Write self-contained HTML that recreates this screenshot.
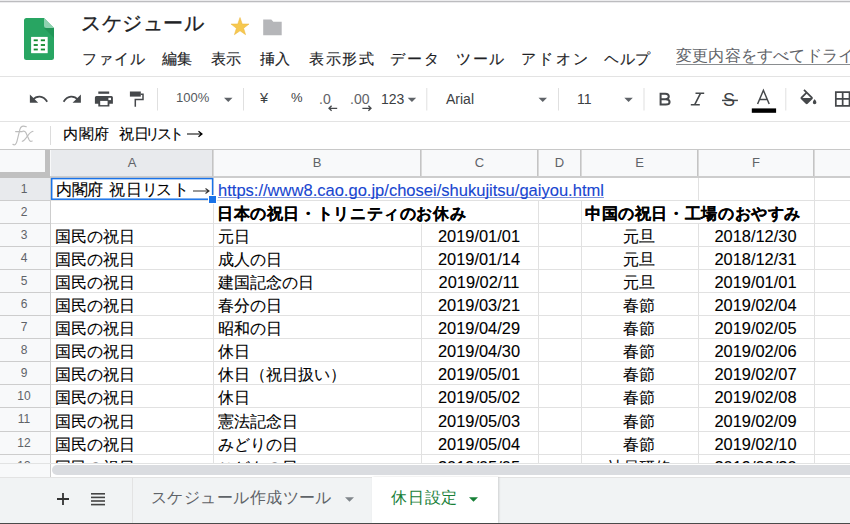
<!DOCTYPE html>
<html><head><meta charset="utf-8">
<style>
*{margin:0;padding:0;box-sizing:border-box}
html,body{width:850px;height:524px;overflow:hidden;background:#fff;font-family:"Liberation Sans",sans-serif;color:#000}
.a{position:absolute;white-space:nowrap}
.hl{position:absolute;left:0;width:850px;height:1px}
.vl{position:absolute;width:1px}
.menu{position:absolute;top:50px;font-size:15px;line-height:18px;color:#202124;white-space:nowrap;-webkit-text-stroke-width:0.15px}
.ch{position:absolute;top:150px;height:26px;font-size:13px;line-height:26px;text-align:center;color:#5f6368}
.rn{position:absolute;left:-1px;width:50px;font-size:12px;text-align:center;color:#5f6368}
.c{position:absolute;font-size:16.4px;line-height:19px;white-space:nowrap;-webkit-text-stroke-width:0.1px}
.ic{position:absolute}
</style></head><body>

<div class="hl" style="top:0;background:#ececee"></div>
<div class="hl" style="top:1px;background:#bcbcbf"></div>
<div class="hl" style="top:2px;background:#ececee"></div>

<svg class="a" style="left:24px;top:18px" width="30" height="42" viewBox="0 0 30 42">
  <path d="M2.5 0H20L30 10V39.5A2.5 2.5 0 0 1 27.5 42H2.5A2.5 2.5 0 0 1 0 39.5V2.5A2.5 2.5 0 0 1 2.5 0Z" fill="#28a562"/>
  <path d="M20 10L30 20V10Z" fill="#1a8a4e" opacity="0.55"/>
  <path d="M20 0L30 10H22.5A2.5 2.5 0 0 1 20 7.5Z" fill="#8fd2b0"/>
  <rect x="7.1" y="19.4" width="16.6" height="16.3" fill="#1d8f50" opacity="0.35"/>
  <rect x="7.1" y="18.9" width="16.6" height="16.3" fill="#fff"/>
  <g fill="#128a2c">
  <rect x="9.7" y="21.4" width="4.1" height="1.8"/><rect x="16.8" y="21.4" width="4.2" height="1.8"/>
  <rect x="9.7" y="26.1" width="4.1" height="1.8"/><rect x="16.8" y="26.1" width="4.2" height="1.8"/>
  <rect x="9.7" y="30.6" width="4.1" height="1.8"/><rect x="16.8" y="30.6" width="4.2" height="1.8"/>
  </g>
</svg>
<div class="a" style="left:81px;top:10px;font-size:20px;letter-spacing:0.6px;line-height:26px;color:#202124;-webkit-text-stroke-width:0.3px">スケジュール</div>

<svg class="a" style="left:230.1px;top:17.2px" width="20" height="20" viewBox="0 0 20 20"><polygon points="10.00,0.50 12.23,6.93 19.04,7.06 13.61,11.17 15.58,17.69 10.00,13.80 4.42,17.69 6.39,11.17 0.96,7.06 7.77,6.93" fill="#f6c84f" stroke="#ebb53a" stroke-width="0.5"/></svg>
<svg class="a" style="left:263px;top:19px" width="20" height="17" viewBox="0 0 20 17"><path d="M0.2 0.6H8.3L10.3 2.8H18.7V16.3H0.2Z" fill="#b5b6b9"/></svg>
<div class="menu" style="left:82px;letter-spacing:0.9px">ファイル</div>
<div class="menu" style="left:162px;letter-spacing:0px">編集</div>
<div class="menu" style="left:211px;letter-spacing:0px">表示</div>
<div class="menu" style="left:260px;letter-spacing:0px">挿入</div>
<div class="menu" style="left:309px;letter-spacing:1.7px">表示形式</div>
<div class="menu" style="left:390px;letter-spacing:2px">データ</div>
<div class="menu" style="left:456px;letter-spacing:1.5px">ツール</div>
<div class="menu" style="left:521px;letter-spacing:2.3px">アドオン</div>
<div class="menu" style="left:604px;letter-spacing:0.7px">ヘルプ</div>
<div class="a" style="left:676px;top:47px;font-size:16px;line-height:18px;letter-spacing:0.2px;color:#5f6368">変更内容をすべてドライブに保存しました</div>
<div class="a" style="left:676px;top:64px;width:174px;height:1px;background:#8a8d90"></div>
<div class="hl" style="top:76px;background:#e3e3e3"></div>

<svg class="a" style="left:0;top:0" width="850" height="524"><path d="M29.9 94.4V102.7H38.2Z" fill="#45484b"/><path d="M32.8 99.6C36.5 95.6 43 94.8 47.2 101.8" fill="none" stroke="#45484b" stroke-width="1.8"/><path d="M80.9 94.4V102.7H72.6Z" fill="#45484b"/><path d="M78 99.6C74.3 95.6 67.8 94.8 63.6 101.8" fill="none" stroke="#45484b" stroke-width="1.8"/><rect x="98.3" y="91.5" width="10.9" height="2.3" fill="#45484b"/><path d="M96.4 95.9H111.4A1.5 1.5 0 0 1 112.9 97.4V103.7H109.4V106.5H98.3V103.7H94.9V97.4A1.5 1.5 0 0 1 96.4 95.9Z" fill="#45484b"/><rect x="100.2" y="100.9" width="7.4" height="4.2" fill="#fff"/><rect x="108.4" y="97.8" width="2.6" height="2.3" fill="#fff"/><rect x="129.9" y="91.5" width="10.9" height="5.1" fill="#45484b"/><path d="M140.8 94.2H143V99.5H135.3V106.7" fill="none" stroke="#45484b" stroke-width="1.5"/><path d="M660.6 92.8V105.6M659.6 93.8H665.3C667.5 93.8 668.8 95 668.8 96.6C668.8 98.2 667.5 99.3 665.3 99.3H660.6M660.6 99.3H665.8C668.2 99.3 669.6 100.6 669.6 102.1C669.6 103.6 668.2 104.6 665.8 104.6H659.6" fill="none" stroke="#45484b" stroke-width="2"/><path d="M695.5 93.2H704.2M690.8 104.8H699.8M700.6 93.2L694.6 104.8" fill="none" stroke="#45484b" stroke-width="1.6"/><path d="M722 100.4H737.9" stroke="#45484b" stroke-width="1.5"/><path d="M757.6 104L763.4 90.3L769.2 104M759.6 99.6H767.2" fill="none" stroke="#45484b" stroke-width="1.5"/><rect x="751.8" y="108.4" width="24.3" height="4.4" fill="#000"/><g transform="translate(797.9,89.2) scale(0.88)"><path d="M16.56 8.94L7.62 0 6.21 1.41l2.38 2.38-5.15 5.15c-.59.59-.59 1.540 0 2.12l5.5 5.5c.29.29.68.44 1.060.44s.77-.15 1.06-.44l5.5-5.5c.59-.58.59-1.53 0-2.12zM5.21 10L10 5.21 14.79 10H5.21zM19 11.5s-2 2.17-2 3.5c0 1.1.9 2 2 2s2-.9 2-2c0-1.33-2-3.5-2-3.5z" fill="#45484b"/></g><g transform="translate(832.4,88.7) scale(0.856)"><path d="M3 3v18h18V3H3zm8 16H5v-6h6v6zm0-8H5V5h6v6zm8 8h-6v-6h6v6zm0-8h-6V5h6v6z" fill="#45484b"/></g><path d="M224 97.8H232.5L228.25 102Z" fill="#5f6368"/><path d="M407.7 97.8H416.2L411.95 102Z" fill="#5f6368"/><path d="M538.5 97.8H547.0L542.75 102Z" fill="#5f6368"/><path d="M624.3 97.8H632.8L628.55 102Z" fill="#5f6368"/><path d="M329 108.3H337.2M331.6 105.8L329 108.3L331.6 110.8" fill="none" stroke="#45484b" stroke-width="1.3"/><path d="M362.4 108.3H371M368.4 105.8L371 108.3L368.4 110.8" fill="none" stroke="#45484b" stroke-width="1.3"/><rect x="157.0" y="88" width="1" height="22.5" fill="#e0e0e0"/><rect x="243.0" y="88" width="1" height="22.5" fill="#e0e0e0"/><rect x="426.3" y="88" width="1" height="22.5" fill="#e0e0e0"/><rect x="558.0" y="88" width="1" height="22.5" fill="#e0e0e0"/><rect x="643.5" y="88" width="1" height="22.5" fill="#e0e0e0"/><rect x="785.3" y="88" width="1" height="22.5" fill="#e0e0e0"/></svg>
<div style="position:absolute;white-space:nowrap;line-height:16px;left:176px;top:89.5px;font-size:13px;color:#55595d">100%</div>
<div style="position:absolute;white-space:nowrap;line-height:16px;left:260px;top:90px;font-size:14.5px;color:#3c4043">¥</div>
<div style="position:absolute;white-space:nowrap;line-height:16px;left:291px;top:90px;font-size:13px;color:#3c4043">%</div>
<div style="position:absolute;white-space:nowrap;line-height:16px;left:319px;top:91px;font-size:14px;color:#5f6368">.0</div>
<div style="position:absolute;white-space:nowrap;line-height:16px;left:350px;top:91px;font-size:14px;color:#5f6368">.00</div>
<div style="position:absolute;white-space:nowrap;line-height:16px;left:381px;top:91px;font-size:14px;color:#3c4043">123</div>
<div style="position:absolute;white-space:nowrap;line-height:16px;left:446px;top:91px;font-size:14px;color:#3c4043">Arial</div>
<div style="position:absolute;white-space:nowrap;line-height:16px;left:577px;top:91px;font-size:14px;color:#3c4043">11</div>
<div style="position:absolute;white-space:nowrap;line-height:16px;left:723px;top:91px;font-size:18px;line-height:18px;color:#3c4043">S</div>

<div class="hl" style="top:121px;background:#e3e3e3"></div>

<svg class="a" style="left:0;top:115px" width="50" height="35" viewBox="0 115 50 35"><g fill="none" stroke="#bdbdbd" stroke-width="1.15" stroke-linecap="round"><path d="M12.9 144.3C14.6 145.6 16.3 144.5 17 141.2L19.9 129.3C20.6 126.4 22.8 125.3 26.3 126.7"/><path d="M15.6 131.6H22.3"/><path d="M22.6 131.2C24 130.8 25.1 131.2 25.8 132.6L29.2 140.1C29.8 141.3 30.9 141.6 32.2 141"/><path d="M33 131.3C31.2 131.6 29.6 133.2 27.3 136.3C25.3 139 23.9 140.9 22.3 141.3"/></g></svg>
<div class="vl" style="left:50px;top:126px;height:19px;background:#dcdcdc"></div>
<div style="position:absolute;top:126px;font-size:14.5px;line-height:17px;color:#000;white-space:nowrap;-webkit-text-stroke-width:0.12px;left:63px">内</div>
<div style="position:absolute;top:126px;font-size:14.5px;line-height:17px;color:#000;white-space:nowrap;-webkit-text-stroke-width:0.12px;left:78.5px">閣</div>
<div style="position:absolute;top:126px;font-size:14.5px;line-height:17px;color:#000;white-space:nowrap;-webkit-text-stroke-width:0.12px;left:94.3px">府</div>
<div style="position:absolute;top:126px;font-size:14.5px;line-height:17px;color:#000;white-space:nowrap;-webkit-text-stroke-width:0.12px;left:119px">祝</div>
<div style="position:absolute;top:126px;font-size:14.5px;line-height:17px;color:#000;white-space:nowrap;-webkit-text-stroke-width:0.12px;left:134px">日</div>
<div style="position:absolute;top:126px;font-size:14.5px;line-height:17px;color:#000;white-space:nowrap;-webkit-text-stroke-width:0.12px;left:145px">リ</div>
<div style="position:absolute;top:126px;font-size:14.5px;line-height:17px;color:#000;white-space:nowrap;-webkit-text-stroke-width:0.12px;left:156.5px">ス</div>
<div style="position:absolute;top:126px;font-size:14.5px;line-height:17px;color:#000;white-space:nowrap;-webkit-text-stroke-width:0.12px;left:169px">ト</div>
<svg class="a" style="left:187px;top:130px" width="16" height="8" viewBox="0 0 16 8"><path d="M0 4H14.5M11.5 1.2L15 4L11.5 6.8" fill="none" stroke="#000" stroke-width="1.2"/></svg>
<div class="hl" style="top:149px;background:#c8c8c8"></div>

<div class="a" style="left:0;top:150px;width:850px;height:26px;background:#f8f9fa"></div>
<div class="a" style="left:51px;top:150px;width:161px;height:26px;background:#e8eaed"></div>
<div class="a" style="left:0;top:178px;width:50px;height:285px;background:#f8f9fa"></div>
<div class="a" style="left:0;top:178px;width:50px;height:22px;background:#e8eaed"></div>
<div class="a" style="left:50px;top:176px;width:800px;height:2px;background:#cdcdcd"></div>
<div class="a" style="left:212px;top:150px;width:1px;height:26px;background:#c4c4c4"></div>
<div class="a" style="left:213px;top:150px;width:1px;height:26px;background:#d9d9d9"></div>
<div class="a" style="left:420px;top:150px;width:1px;height:26px;background:#c4c4c4"></div>
<div class="a" style="left:421px;top:150px;width:1px;height:26px;background:#d9d9d9"></div>
<div class="a" style="left:537px;top:150px;width:1px;height:26px;background:#c4c4c4"></div>
<div class="a" style="left:538px;top:150px;width:1px;height:26px;background:#d9d9d9"></div>
<div class="a" style="left:580px;top:150px;width:1px;height:26px;background:#c4c4c4"></div>
<div class="a" style="left:581px;top:150px;width:1px;height:26px;background:#d9d9d9"></div>
<div class="a" style="left:697px;top:150px;width:1px;height:26px;background:#c4c4c4"></div>
<div class="a" style="left:698px;top:150px;width:1px;height:26px;background:#d9d9d9"></div>
<div class="a" style="left:813px;top:150px;width:1px;height:26px;background:#c4c4c4"></div>
<div class="a" style="left:814px;top:150px;width:1px;height:26px;background:#d9d9d9"></div>
<div class="a" style="left:45px;top:150px;width:5px;height:28px;background:#c0c0c0"></div>
<div class="a" style="left:0;top:172px;width:50px;height:6px;background:#c0c0c0"></div>
<div class="ch" style="left:51px;width:162px">A</div>
<div class="ch" style="left:213px;width:208px">B</div>
<div class="ch" style="left:421px;width:117px">C</div>
<div class="ch" style="left:538px;width:43px">D</div>
<div class="ch" style="left:581px;width:117px">E</div>
<div class="ch" style="left:698px;width:116px">F</div>
<div class="ch" style="left:814px;width:116px">G</div>
<div class="a" style="left:0;top:200px;width:50px;height:1px;background:#cdcdcd"></div>
<div class="a" style="left:51px;top:200px;width:800px;height:1px;background:#e1e1e1"></div>
<div class="a" style="left:0;top:223px;width:50px;height:1px;background:#cdcdcd"></div>
<div class="a" style="left:51px;top:223px;width:800px;height:1px;background:#e1e1e1"></div>
<div class="a" style="left:0;top:246px;width:50px;height:1px;background:#cdcdcd"></div>
<div class="a" style="left:51px;top:246px;width:800px;height:1px;background:#e1e1e1"></div>
<div class="a" style="left:0;top:269px;width:50px;height:1px;background:#cdcdcd"></div>
<div class="a" style="left:51px;top:269px;width:800px;height:1px;background:#e1e1e1"></div>
<div class="a" style="left:0;top:292px;width:50px;height:1px;background:#cdcdcd"></div>
<div class="a" style="left:51px;top:292px;width:800px;height:1px;background:#e1e1e1"></div>
<div class="a" style="left:0;top:315px;width:50px;height:1px;background:#cdcdcd"></div>
<div class="a" style="left:51px;top:315px;width:800px;height:1px;background:#e1e1e1"></div>
<div class="a" style="left:0;top:338px;width:50px;height:1px;background:#cdcdcd"></div>
<div class="a" style="left:51px;top:338px;width:800px;height:1px;background:#e1e1e1"></div>
<div class="a" style="left:0;top:361px;width:50px;height:1px;background:#cdcdcd"></div>
<div class="a" style="left:51px;top:361px;width:800px;height:1px;background:#e1e1e1"></div>
<div class="a" style="left:0;top:384px;width:50px;height:1px;background:#cdcdcd"></div>
<div class="a" style="left:51px;top:384px;width:800px;height:1px;background:#e1e1e1"></div>
<div class="a" style="left:0;top:407px;width:50px;height:1px;background:#cdcdcd"></div>
<div class="a" style="left:51px;top:407px;width:800px;height:1px;background:#e1e1e1"></div>
<div class="a" style="left:0;top:431px;width:50px;height:1px;background:#cdcdcd"></div>
<div class="a" style="left:51px;top:431px;width:800px;height:1px;background:#e1e1e1"></div>
<div class="a" style="left:0;top:454px;width:50px;height:1px;background:#cdcdcd"></div>
<div class="a" style="left:51px;top:454px;width:800px;height:1px;background:#e1e1e1"></div>
<div class="a" style="left:213px;top:178px;width:1px;height:22px;background:#e1e1e1"></div>
<div class="a" style="left:213px;top:201px;width:1px;height:22px;background:#e1e1e1"></div>
<div class="a" style="left:213px;top:223px;width:1px;height:240px;background:#e1e1e1"></div>
<div class="a" style="left:421px;top:223px;width:1px;height:240px;background:#e1e1e1"></div>
<div class="a" style="left:538px;top:201px;width:1px;height:22px;background:#e1e1e1"></div>
<div class="a" style="left:538px;top:223px;width:1px;height:240px;background:#e1e1e1"></div>
<div class="a" style="left:581px;top:201px;width:1px;height:22px;background:#e1e1e1"></div>
<div class="a" style="left:581px;top:223px;width:1px;height:240px;background:#e1e1e1"></div>
<div class="a" style="left:698px;top:178px;width:1px;height:22px;background:#e1e1e1"></div>
<div class="a" style="left:698px;top:223px;width:1px;height:240px;background:#e1e1e1"></div>
<div class="a" style="left:814px;top:178px;width:1px;height:22px;background:#e1e1e1"></div>
<div class="a" style="left:814px;top:201px;width:1px;height:22px;background:#e1e1e1"></div>
<div class="a" style="left:814px;top:223px;width:1px;height:240px;background:#e1e1e1"></div>
<div class="a" style="left:50px;top:178px;width:1px;height:299px;background:#cdcdcd"></div>
<div class="rn" style="top:178px;height:22px;line-height:22px">1</div>
<div class="rn" style="top:201px;height:22px;line-height:22px">2</div>
<div class="rn" style="top:224px;height:22px;line-height:22px">3</div>
<div class="rn" style="top:247px;height:22px;line-height:22px">4</div>
<div class="rn" style="top:270px;height:22px;line-height:22px">5</div>
<div class="rn" style="top:293px;height:22px;line-height:22px">6</div>
<div class="rn" style="top:316px;height:22px;line-height:22px">7</div>
<div class="rn" style="top:339px;height:22px;line-height:22px">8</div>
<div class="rn" style="top:362px;height:22px;line-height:22px">9</div>
<div class="rn" style="top:385px;height:22px;line-height:22px">10</div>
<div class="rn" style="top:408px;height:23px;line-height:23px">11</div>
<div class="rn" style="top:432px;height:22px;line-height:22px">12</div>
<div class="rn" style="top:455px;height:22px;line-height:22px">13</div>
<div class="a" style="left:51px;top:178px;width:800px;height:285px;overflow:hidden">
<div class="c" style="left:4.799999999999997px;top:2px">内</div>
<div class="c" style="left:20.900000000000006px;top:2px">閣</div>
<div class="c" style="left:35.900000000000006px;top:2px">府</div>
<div class="c" style="left:57.599999999999994px;top:2px">祝</div>
<div class="c" style="left:74.7px;top:2px">日</div>
<div class="c" style="left:90.5px;top:2px">リ</div>
<div class="c" style="left:105px;top:2px">ス</div>
<div class="c" style="left:122px;top:2px">ト</div>
<svg class="a" style="left:141.5px;top:9px" width="17" height="8" viewBox="0 0 17 8"><path d="M0 4H15.5M12.5 1.5L16 4L12.5 6.5" fill="none" stroke="#333" stroke-width="1.1"/></svg>
<div class="c" style="left:167px;top:3px;color:#1846d0;text-decoration:underline;text-decoration-color:#8095dc;text-decoration-skip-ink:none;font-size:16.55px;">https://www8.cao.go.jp/chosei/shukujitsu/gaiyou.html</div>
<div class="c" style="left:166px;top:26px;font-weight:bold;letter-spacing:0.62px;">日本の祝日・トリニティのお休み</div>
<div class="c" style="left:534px;top:26px;font-weight:bold;letter-spacing:0.62px;">中国の祝日・工場のおやすみ</div>
<div class="c" style="left:4px;top:49px;font-size:16.4px;">国民の祝日</div>
<div class="c" style="left:167px;top:49px;font-size:16.4px;">元日</div>
<div class="c" style="left:370px;top:49px;width:116px;text-align:center;">2019/01/01</div>
<div class="c" style="left:530px;top:49px;width:116px;text-align:center;font-size:16.4px;">元旦</div>
<div class="c" style="left:647px;top:49px;width:115px;text-align:center;">2018/12/30</div>
<div class="c" style="left:4px;top:72px;font-size:16.4px;">国民の祝日</div>
<div class="c" style="left:167px;top:72px;font-size:16.4px;">成人の日</div>
<div class="c" style="left:370px;top:72px;width:116px;text-align:center;">2019/01/14</div>
<div class="c" style="left:530px;top:72px;width:116px;text-align:center;font-size:16.4px;">元旦</div>
<div class="c" style="left:647px;top:72px;width:115px;text-align:center;">2018/12/31</div>
<div class="c" style="left:4px;top:95px;font-size:16.4px;">国民の祝日</div>
<div class="c" style="left:167px;top:95px;font-size:16.4px;">建国記念の日</div>
<div class="c" style="left:370px;top:95px;width:116px;text-align:center;">2019/02/11</div>
<div class="c" style="left:530px;top:95px;width:116px;text-align:center;font-size:16.4px;">元旦</div>
<div class="c" style="left:647px;top:95px;width:115px;text-align:center;">2019/01/01</div>
<div class="c" style="left:4px;top:118px;font-size:16.4px;">国民の祝日</div>
<div class="c" style="left:167px;top:118px;font-size:16.4px;">春分の日</div>
<div class="c" style="left:370px;top:118px;width:116px;text-align:center;">2019/03/21</div>
<div class="c" style="left:530px;top:118px;width:116px;text-align:center;font-size:16.4px;">春節</div>
<div class="c" style="left:647px;top:118px;width:115px;text-align:center;">2019/02/04</div>
<div class="c" style="left:4px;top:141px;font-size:16.4px;">国民の祝日</div>
<div class="c" style="left:167px;top:141px;font-size:16.4px;">昭和の日</div>
<div class="c" style="left:370px;top:141px;width:116px;text-align:center;">2019/04/29</div>
<div class="c" style="left:530px;top:141px;width:116px;text-align:center;font-size:16.4px;">春節</div>
<div class="c" style="left:647px;top:141px;width:115px;text-align:center;">2019/02/05</div>
<div class="c" style="left:4px;top:164px;font-size:16.4px;">国民の祝日</div>
<div class="c" style="left:167px;top:164px;font-size:16.4px;">休日</div>
<div class="c" style="left:370px;top:164px;width:116px;text-align:center;">2019/04/30</div>
<div class="c" style="left:530px;top:164px;width:116px;text-align:center;font-size:16.4px;">春節</div>
<div class="c" style="left:647px;top:164px;width:115px;text-align:center;">2019/02/06</div>
<div class="c" style="left:4px;top:187px;font-size:16.4px;">国民の祝日</div>
<div class="c" style="left:167px;top:187px;font-size:16.4px;">休日（祝日扱い）</div>
<div class="c" style="left:370px;top:187px;width:116px;text-align:center;">2019/05/01</div>
<div class="c" style="left:530px;top:187px;width:116px;text-align:center;font-size:16.4px;">春節</div>
<div class="c" style="left:647px;top:187px;width:115px;text-align:center;">2019/02/07</div>
<div class="c" style="left:4px;top:210px;font-size:16.4px;">国民の祝日</div>
<div class="c" style="left:167px;top:210px;font-size:16.4px;">休日</div>
<div class="c" style="left:370px;top:210px;width:116px;text-align:center;">2019/05/02</div>
<div class="c" style="left:530px;top:210px;width:116px;text-align:center;font-size:16.4px;">春節</div>
<div class="c" style="left:647px;top:210px;width:115px;text-align:center;">2019/02/08</div>
<div class="c" style="left:4px;top:234px;font-size:16.4px;">国民の祝日</div>
<div class="c" style="left:167px;top:234px;font-size:16.4px;">憲法記念日</div>
<div class="c" style="left:370px;top:234px;width:116px;text-align:center;">2019/05/03</div>
<div class="c" style="left:530px;top:234px;width:116px;text-align:center;font-size:16.4px;">春節</div>
<div class="c" style="left:647px;top:234px;width:115px;text-align:center;">2019/02/09</div>
<div class="c" style="left:4px;top:257px;font-size:16.4px;">国民の祝日</div>
<div class="c" style="left:167px;top:257px;font-size:16.4px;">みどりの日</div>
<div class="c" style="left:370px;top:257px;width:116px;text-align:center;">2019/05/04</div>
<div class="c" style="left:530px;top:257px;width:116px;text-align:center;font-size:16.4px;">春節</div>
<div class="c" style="left:647px;top:257px;width:115px;text-align:center;">2019/02/10</div>
<div class="c" style="left:4px;top:280px;font-size:16.4px;">国民の祝日</div>
<div class="c" style="left:167px;top:280px;font-size:16.4px;">こどもの日</div>
<div class="c" style="left:370px;top:280px;width:116px;text-align:center;">2019/05/05</div>
<div class="c" style="left:530px;top:280px;width:116px;text-align:center;font-size:16.4px;">社員研修</div>
<div class="c" style="left:647px;top:280px;width:115px;text-align:center;">2019/02/20</div>
</div>

<svg class="a" style="left:0;top:0" width="850" height="524"><rect x="51.7" y="178.6" width="160.9" height="20.6" fill="none" stroke="#1a73e8" stroke-width="1.5"/></svg>
<div class="a" style="left:208px;top:195px;width:9px;height:9px;background:#1a73e8;border:1px solid #fff"></div>

<div class="a" style="left:0;top:463px;width:850px;height:1px;background:#e2e3e3"></div>
<div class="a" style="left:0;top:464px;width:50px;height:13px;background:#f8f9fa"></div>
<div class="a" style="left:52px;top:465px;width:820px;height:10px;border-radius:5px;background:#dadce0"></div>
<div class="hl" style="top:477px;background:#e3e3e3"></div>
<div class="a" style="left:0;top:478px;width:850px;height:45px;background:#f1f3f4"></div>
<div class="hl" style="top:523px;background:#4a4a4a"></div>
<div class="vl" style="left:132px;top:478px;height:45px;background:#e3e3e3"></div>
<svg class="ic" style="left:56.5px;top:492.5px" width="12" height="12" viewBox="0 0 12 12"><path d="M6 0V12M0 6H12" stroke="#333" stroke-width="1.8"/></svg>
<svg class="ic" style="left:91px;top:493px" width="14" height="13" viewBox="0 0 14 13"><rect y="0" width="14" height="1.6" fill="#444"/><rect y="3.6" width="14" height="1.6" fill="#444"/><rect y="7.2" width="14" height="1.6" fill="#444"/><rect y="10.8" width="14" height="1.6" fill="#444"/></svg>
<div class="a" style="left:151px;top:488px;font-size:15.5px;line-height:19px;letter-spacing:0.45px;color:#5f6368">スケジュール作成ツール</div>
<svg class="ic" style="left:345px;top:497px" width="9" height="5" viewBox="0 0 10 5"><path d="M0 0H10L5 5Z" fill="#80868b"/></svg>
<div class="a" style="left:372px;top:477px;width:126px;height:46px;background:#fff;box-shadow:1px 0 2px rgba(0,0,0,0.15)"></div>
<div class="a" style="left:391px;top:488px;font-size:15.5px;line-height:19px;letter-spacing:0.8px;color:#188038">休日設定</div>
<svg class="ic" style="left:469px;top:497px" width="9" height="5" viewBox="0 0 10 5"><path d="M0 0H10L5 5Z" fill="#188038"/></svg>

</body></html>
